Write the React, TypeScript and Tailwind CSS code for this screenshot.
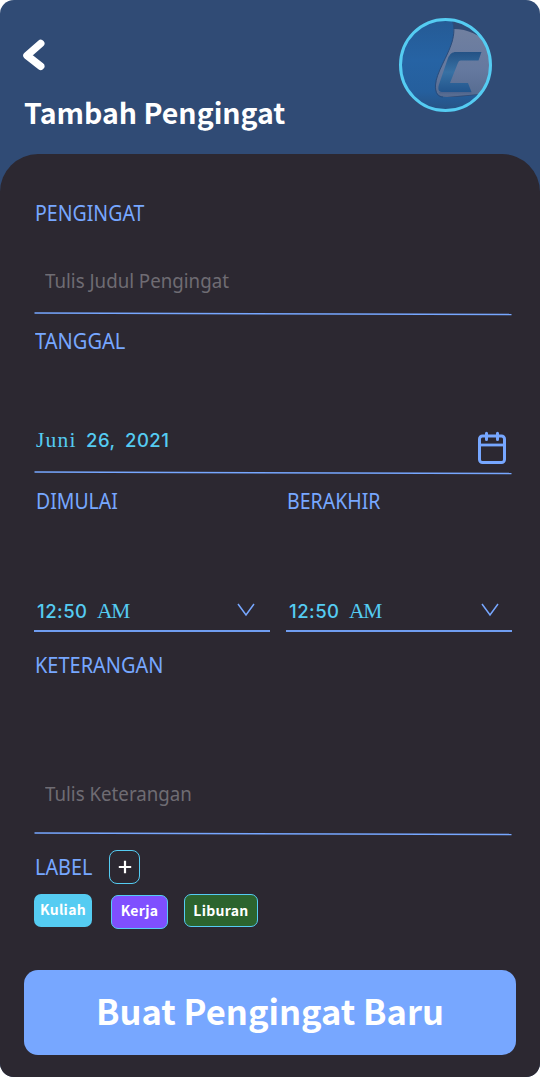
import React from "react";

const labelClass =
  "h-[30px] origin-left whitespace-nowrap font-['Noto_Sans',sans-serif] text-[21px] leading-[30px] text-[#77a7ff]";
const placeholderClass =
  "ml-[45px] h-[30px] origin-left scale-x-[0.912] whitespace-nowrap font-['Noto_Sans',sans-serif] text-[20.5px] leading-[30px] text-[#6f6c73]";

function Rule() {
  return (
    <svg className="ml-[34px] block h-1 w-[478px]" viewBox="0 0 478 4" fill="none">
      <path d="M.5 1 477.5 2.5" stroke="#77a7ff" strokeWidth="1.6" />
    </svg>
  );
}

function Avatar() {
  return (
    <svg className="h-[96px] w-[94px]" viewBox="0 0 94 96" fill="none">
      <defs>
        <linearGradient id="disc" x1="0" y1="0" x2="0" y2="1">
          <stop offset="0" stopColor="#255a94" />
          <stop offset=".45" stopColor="#2663a4" />
          <stop offset=".78" stopColor="#255f9d" />
          <stop offset="1" stopColor="#28507f" />
        </linearGradient>
        <linearGradient id="silver" x1="0" y1="0" x2="0" y2="1">
          <stop offset="0" stopColor="#7180a0" />
          <stop offset=".6" stopColor="#65799f" />
          <stop offset="1" stopColor="#566b90" />
        </linearGradient>
        <linearGradient id="letter" x1="0" y1="0" x2="0" y2="1">
          <stop offset="0" stopColor="#245285" />
          <stop offset=".5" stopColor="#3871a4" />
          <stop offset="1" stopColor="#22558d" />
        </linearGradient>
        <clipPath id="round">
          <ellipse cx="46.5" cy="48" rx="45" ry="46" />
        </clipPath>
      </defs>
      <g clipPath="url(#round)">
        <path d="M0 0H53C56 9 55 17 54 22C51 36 37 60 37 71C38 82 46 82 94 76V96H0Z" fill="url(#disc)" />
        <path
          d="M54.5 12C69 12 81 18 90 28V76C78 77 61 79 48 80C38 80 36 75 37 66C38 56 46 43 50 33C54 24 55 18 54.5 12Z"
          fill="url(#silver)"
        />
        <path d="M53 3C56 10 55 18 53 25C49 39 37 56 36.5 68C36 76 39 80 44 80" stroke="#2a4c7b" strokeWidth="1" />
        <path d="M82.5 35 79.5 43.5H62C60 43.5 59.5 44.5 58.5 47L51 66H69L72.5 75H43C39 75 38.5 71 40.5 66L49 41C51 37 53 35 57 35Z" fill="url(#letter)" />
        <path d="M40 75.8H72.5" stroke="#4a628c" />
      </g>
      <ellipse cx="46.5" cy="48" rx="45" ry="45.6" stroke="#55ccf2" strokeWidth="3" />
    </svg>
  );
}

function TimeValue() {
  return (
    <div className="flex h-[30px] items-baseline whitespace-nowrap leading-[30px] text-[#55ccf2]">
      <span className="w-[60px] font-['Inter',sans-serif] text-[18.5px] font-medium tracking-[0.5px]">12:50</span>
      <span className="font-['Liberation_Serif',serif] text-[21.5px] tracking-[-1.3px]">AM</span>
    </div>
  );
}

function Chevron() {
  return (
    <svg className="h-[14px] w-[18px]" viewBox="0 0 18 14" fill="none">
      <path d="M1 1 9 12 17 1" stroke="#77a7ff" strokeWidth="1.5" />
    </svg>
  );
}

export default function App() {
  return (
    <div className="h-[1078px] w-[540px] bg-white">
      <main className="flex h-[1077px] flex-col overflow-hidden rounded-[14px] bg-[#304b75]">
        <header className="flex h-[154px] shrink-0 justify-between">
          <div className="pl-[22px] pt-[39px]">
            <svg className="h-[32px] w-[24px]" viewBox="0 0 24 32" fill="none">
              <path d="M18.7 4.5 5 16.5 18.7 27.3" stroke="white" strokeWidth="7.5" strokeLinecap="round" strokeLinejoin="round" />
            </svg>
            <h1 className="ml-[2px] mt-[20px] h-[42px] whitespace-nowrap font-['Noto_Sans_CJK_JP',sans-serif] text-[28.5px] font-bold leading-[42px] text-white">
              Tambah Pengingat
            </h1>
          </div>
          <div className="pr-[47px] pt-[17px]">
            <Avatar />
          </div>
        </header>
        <section className="flex-1 rounded-t-[38px] bg-[#2c2831] pt-[44px]">
          <div className={`${labelClass} ml-[35px] scale-x-[0.93]`}>PENGINGAT</div>
          <div className={`${placeholderClass} mt-[37px]`}>Tulis Judul Pengingat</div>
          <div className="pt-[17px]">
            <Rule />
          </div>
          <div className={`${labelClass} ml-[35px] mt-[10px] scale-x-[0.955]`}>TANGGAL</div>
          <div className="ml-[36px] mr-[33px] mt-[69px] flex h-[46px] justify-between text-[#55ccf2]">
            <div className="flex h-[30px] items-baseline whitespace-nowrap leading-[30px]">
              <span className="w-[50px] font-['Liberation_Serif',serif] text-[21.5px] tracking-[1.2px]">Juni</span>
              <span className="w-[39px] font-['Inter',sans-serif] text-[18.5px] font-medium tracking-[0.5px]">26,</span>
              <span className="font-['Inter',sans-serif] text-[18.5px] font-medium tracking-[0.5px]">2021</span>
            </div>
            <svg className="mt-[6px] h-[34px] w-[30px]" viewBox="0 0 30 34" fill="none" stroke="#77a7ff" strokeWidth="3">
              <rect x="2.5" y="5" width="25" height="26.5" rx="3" />
              <path d="M2.5 14H27.5" strokeWidth="2.8" />
              <path d="M9.5 2.3V8.5M20.5 2.3V8.5" strokeLinecap="round" />
            </svg>
          </div>
          <Rule />
          <div className="mt-[11px] flex pl-[36px]">
            <div className={`${labelClass} w-[251px] scale-x-[0.925]`}>DIMULAI</div>
            <div className={`${labelClass} scale-x-[0.93]`}>BERAKHIR</div>
          </div>
          <div className="ml-[34px] mt-[80px] flex gap-[16px]">
            <div className="flex h-[36px] w-[236px] justify-between border-b-2 border-[#709df0] pl-[3px] pr-[15px]">
              <TimeValue />
              <div className="pt-[7px]">
                <Chevron />
              </div>
            </div>
            <div className="flex h-[36px] w-[226px] justify-between border-b-2 border-[#709df0] pl-[3px] pr-[13px]">
              <TimeValue />
              <div className="pt-[7px]">
                <Chevron />
              </div>
            </div>
          </div>
          <div className={`${labelClass} ml-[35px] mt-[18px] scale-x-[0.95]`}>KETERANGAN</div>
          <div className={`${placeholderClass} mt-[98px]`}>Tulis Keterangan</div>
          <div className="pt-[24px]">
            <Rule />
          </div>
          <div className="ml-[35px] mt-[14px] flex h-[34px] items-center">
            <div className={`${labelClass} w-[74px] scale-x-[0.945]`}>LABEL</div>
            <button className="flex h-[34px] w-[31px] items-center justify-center rounded-[8px] border-[1.5px] border-[#55ccf2]">
              <svg className="h-[14px] w-[14px]" viewBox="0 0 14 14" fill="none">
                <path d="M7 .8V13.2M.8 7H13.2" stroke="white" strokeWidth="2.2" />
              </svg>
            </button>
          </div>
          <div className="ml-[34px] mt-[10px] flex h-[35px] items-start font-['Noto_Sans_CJK_JP',sans-serif] text-[14px] font-bold tracking-[0.3px] text-white">
            <span className="flex h-[33px] w-[58px] items-center justify-center rounded-[7px] bg-[#55ccf2] pb-[3px]">Kuliah</span>
            <span className="ml-[19px] mt-[1px] flex h-[34px] w-[57px] items-center justify-center rounded-[7px] border-[1.5px] border-[#55ccf2] bg-[#7f4fff] pb-[3px]">Kerja</span>
            <span className="ml-[16px] flex h-[33px] w-[74px] items-center justify-center rounded-[7px] border-[1.5px] border-[#55ccf2] bg-[#2c642e]">Liburan</span>
          </div>
          <button className="ml-[24px] mt-[41px] flex h-[85px] w-[492px] items-center justify-center rounded-[14px] bg-[#77a7ff] pb-[4px] font-['Noto_Sans_CJK_JP',sans-serif] text-[34.5px] font-bold text-white">
            Buat Pengingat Baru
          </button>
        </section>
      </main>
    </div>
  );
}
